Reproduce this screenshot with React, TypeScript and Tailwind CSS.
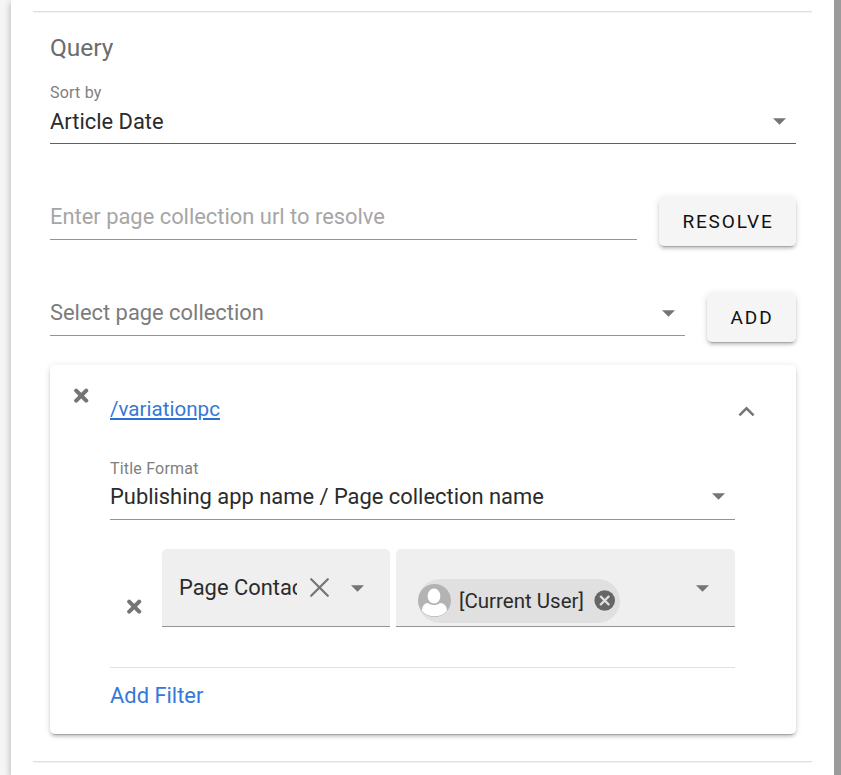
import type { ReactNode } from "react";

function Caret({ className = "" }: { className?: string }) {
  return (
    <svg className={`h-[7px] w-[13px] shrink-0 text-[#757575] ${className}`} viewBox="0 0 13 7" fill="currentColor">
      <path d="M0 0.2h13L6.5 6.7z" />
    </svg>
  );
}

function Cross() {
  return (
    <svg className="h-[15px] w-[15px]" viewBox="0 0 15 15" fill="none" stroke="#757575" strokeWidth="4.1" strokeLinecap="round">
      <path d="M2.2 2.6l10 10M12.2 2.6l-10 10" />
    </svg>
  );
}

function RaisedButton({ children, className = "" }: { children: ReactNode; className?: string }) {
  return (
    <button
      className={`mt-[0.5px] h-[49.5px] shrink-0 rounded-[5px] bg-[#f5f5f5] pt-[2.5px] pl-[1.5px] text-[19px] font-[450] tracking-[1.85px] text-[#111] shadow-[0_4px_1px_-3px_rgba(0,0,0,0.2),0_3px_3px_0_rgba(0,0,0,0.14),0_1px_7px_0_rgba(0,0,0,0.12)] ${className}`}
    >
      {children}
    </button>
  );
}

export default function App() {
  return (
    <div className="flex h-[775px] w-[841px] overflow-hidden bg-[#f5f5f5] pl-[11px] font-[Roboto,sans-serif] text-[21.9px] font-normal text-[#2b2b2b]">
      <main className="w-[823px] shrink-0 bg-white px-[22px] pt-[11px] shadow-[0_3px_7px_rgba(0,0,0,0.3)]">
        <div className="h-[2px] border-t border-[#e0e0e0] bg-[#f3f3f3]" />
        <div className="pr-4 pl-[17px]">
          <h2 className="mt-[19px] h-8 text-[24.5px] leading-8 text-[#6c6c6c]">Query</h2>

          <label className="mt-[18px] block h-5 pt-px text-[16px] leading-5 tracking-[0.2px] text-[#808080]">Sort by</label>
          <div className="flex h-[42px] items-center justify-between border-b border-[#616161] pr-[10px] pb-[3px]">
            <span className="pt-[2px] leading-[32px]">Article Date</span>
            <Caret />
          </div>

          <div className="mt-[52px] flex h-[50px] justify-between">
            <div className="flex h-[44px] w-[587px] items-center border-b border-[#949494] pb-px leading-[32px] text-[#a6a6a6]">
              Enter page collection url to resolve
            </div>
            <RaisedButton className="w-[137.4px]">RESOLVE</RaisedButton>
          </div>

          <div className="mt-[46px] flex h-[50px] justify-between">
            <div className="flex h-[44px] w-[635px] items-center justify-between border-b border-[#949494] pr-[10px] pb-px text-[#7c7c7c]">
              <span className="leading-[32px]">Select page collection</span>
              <Caret />
            </div>
            <RaisedButton className="w-[89.4px]">ADD</RaisedButton>
          </div>

          <section className="mt-[23px] flex h-[369px] rounded-[5px] bg-white pt-[23px] shadow-[0_4px_1px_-3px_rgba(0,0,0,0.2),0_3px_3px_0_rgba(0,0,0,0.14),0_1px_7px_0_rgba(0,0,0,0.12)]">
            <div className="w-[60px] shrink-0 pl-[24px]">
              <Cross />
            </div>
            <div className="w-[625px]">
              <div className="flex h-[42px] items-center justify-between">
                <a className="text-[20.6px] leading-[30px] text-[#3678d6] underline decoration-[#2a70d2] decoration-2 underline-offset-[2px]">/variationpc</a>
                <svg className="mt-[5px] -mr-[20px] h-[11px] w-[17px]" viewBox="0 0 17 11" fill="none" stroke="#757575" strokeWidth="2.5">
                  <path d="M1.4 9.4L8.5 2.3l7.1 7.1" />
                </svg>
              </div>

              <label className="mt-[28px] block h-5 pt-px text-[16px] leading-5 tracking-[0.2px] text-[#808080]">Title Format</label>
              <div className="flex h-[42px] items-center justify-between border-b border-[#949494] pr-[10px] pb-[4px]">
                <span className="leading-[33px]">Publishing app name / Page collection name</span>
                <Caret />
              </div>

              <div className="mt-[29px] flex h-[78px]">
                <div className="w-[52px] shrink-0 pt-[50px] pl-[17px]">
                  <Cross />
                </div>
                <div className="flex w-[228px] items-center rounded-t-[5px] border-b border-[#949494] bg-[#efefef] pl-[17px]">
                  <span className="w-[118px] overflow-hidden leading-[32px] whitespace-nowrap">Page Contact</span>
                  <svg className="ml-[13px] h-[19px] w-[19px]" viewBox="0 0 19 19" fill="none" stroke="#757575" strokeWidth="2.2" strokeLinecap="round">
                    <path d="M1.2 1.2l16.6 16.6M17.8 1.2L1.2 17.8" />
                  </svg>
                  <Caret className="mt-px ml-[22px]" />
                </div>
                <div className="ml-[6px] flex w-[339px] items-center justify-between rounded-t-[5px] border-b border-[#949494] bg-[#efefef] pr-[26px] pl-[22px]">
                  <div className="mt-[27px] flex h-[44px] w-[202px] items-center rounded-full bg-[#e0e0e0]">
                    <svg className="-mt-px h-[33px] w-[33px]" viewBox="0 0 33 33">
                      <clipPath id="avatar">
                        <circle cx="16.5" cy="16.5" r="16.5" />
                      </clipPath>
                      <g clipPath="url(#avatar)">
                        <path fill="#b3b3b3" d="M0 0h33v33H0z" />
                        <ellipse cx="16" cy="12" rx="6.4" ry="7.5" fill="#fff" />
                        <path fill="#fff" d="M4 27c0-5 2.5-8 6-8 3.500 2.800 8.500 2.800 12 0 4 0 7 3 7 8-3 3.500-7.500 5.200-12.500 5.200S7 30.500 4 27z" />
                      </g>
                    </svg>
                    <span className="ml-2 w-[125px] whitespace-nowrap text-[20.5px]">[Current User]</span>
                    <svg className="-mt-px ml-[10px] h-[21px] w-[21px]" viewBox="0 0 21 21">
                      <circle cx="10.7" cy="10.5" r="10.3" fill="#666" />
                      <path stroke="#e0e0e0" strokeWidth="2.4" d="M6.200 6l9 9M15.200 6l-9 9" />
                    </svg>
                  </div>
                  <Caret className="mt-px" />
                </div>
              </div>

              <div className="mt-[40px] h-px bg-[#e0e0e0]" />
              <a className="mt-[12px] block h-8 leading-8 text-[#3678d6]">Add Filter</a>
            </div>
          </section>
        </div>
        <div className="mt-[27px] h-[2px] border-t border-[#e0e0e0] bg-[#f3f3f3]" />
      </main>
      <div className="w-[7px] shrink-0 bg-[#9b9b9b]" />
    </div>
  );
}
